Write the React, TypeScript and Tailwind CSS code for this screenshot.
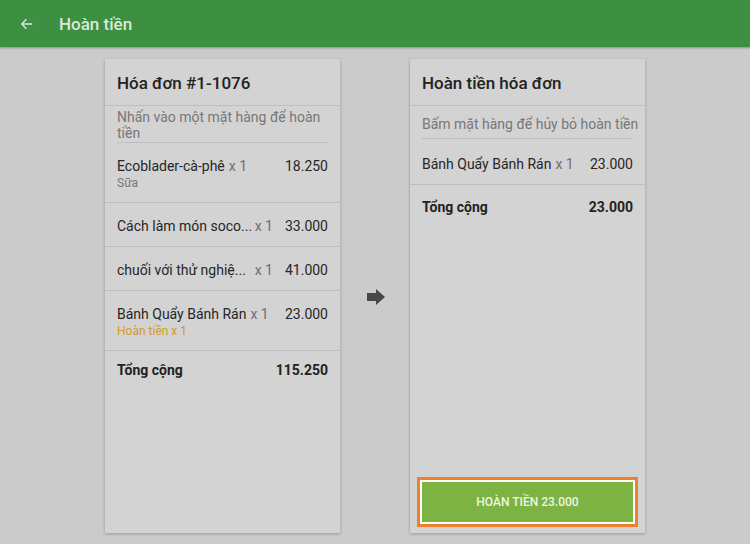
import React from "react";

function Row({ name, qty, price, sub, subColor, nameW, pt = "pt-[14px]", pb = "pb-[11px]" }: { name: string; qty: string; price: string; sub?: string; subColor?: string; nameW?: string; pt?: string; pb?: string }) {
  return (
    <div className={`border-b border-[#bdbdbd] px-3 ${pt} ${pb}`}>
      <div className="flex items-center text-[14px] leading-[18px]">
        <span className={`text-[#262626] whitespace-nowrap overflow-hidden ${nameW ?? ""}`}>{name}</span>
        <span className="text-[#6f6f6f] whitespace-nowrap ml-1">{qty}</span>
        <span className="ml-auto pl-3 text-[#262626]">{price}</span>
      </div>
      {sub && <div className={`text-[12px] leading-[16px] ${subColor}`}>{sub}</div>}
    </div>
  );
}

export default function App() {
  return (
    <div className="w-[750px] h-[544px] bg-[#cbcbcb] flex flex-col" style={{ fontFamily: "Roboto, 'Noto Sans', sans-serif" }}>
      <div className="h-[47px] bg-[#3d8f41] flex items-center shadow-[0_1px_2px_rgba(0,0,0,0.3)] shrink-0">
        <svg width="14" height="14" viewBox="0 0 24 24" className="ml-[20px] mt-[1px]" fill="none" stroke="#d9e8d9" strokeWidth="2.4">
          <path d="M21 12H4M11 4l-8 8 8 8" />
        </svg>
        <span className="ml-[25px] mt-[2px] text-[17px] text-[#dbe9dc] font-medium">Hoàn tiền</span>
      </div>
      <div className="flex pt-[12px] pl-[105px] h-[486px]">
        <div className="w-[235px] bg-[#d3d3d3] shadow-[0_1px_3px_rgba(0,0,0,0.25)] flex flex-col">
          <div className="h-[47px] flex items-center px-3 pt-[3px] border-b border-[#bdbdbd] text-[17px] font-medium text-[#222]">Hóa đơn #1-1076</div>
          <div className="px-3">
            <div className="pt-[3px] pb-[1px] border-b border-[#bdbdbd] text-[14px] leading-[16px] text-[#777]">Nhấn vào một mặt hàng để hoàn tiền</div>
          </div>
          <Row name="Ecoblader-cà-phê" qty="x 1" price="18.250" sub="Sữa" subColor="text-[#777]" />
          <Row name="Cách làm món soco..." qty="x 1" price="33.000" nameW="w-[134px]" />
          <Row name="chuối với thử nghiệ..." qty="x 1" price="41.000" nameW="w-[134px]" />
          <Row name="Bánh Quẩy Bánh Rán" qty="x 1" price="23.000" sub="Hoàn tiền x 1" subColor="text-[#d69a27]" />
          <div className="flex items-center px-3 pt-[9px] text-[14px] font-bold text-[#222]">
            <span>Tổng cộng</span>
            <span className="ml-auto">115.250</span>
          </div>
        </div>
        <div className="w-[70px] flex items-center justify-center">
          <svg width="18" height="16" viewBox="0 0 18 16" className="mt-[2px] ml-[1px]">
            <path d="M0 4h9V0l9 8-9 8v-4H0z" fill="#474747" />
          </svg>
        </div>
        <div className="w-[235px] bg-[#d3d3d3] shadow-[0_1px_3px_rgba(0,0,0,0.25)] flex flex-col">
          <div className="h-[47px] flex items-center px-3 pt-[3px] border-b border-[#bdbdbd] text-[17px] font-medium text-[#222]">Hoàn tiền hóa đơn</div>
          <div className="px-3">
            <div className="pt-[10px] pb-[6px] border-b border-[#bdbdbd] text-[14px] leading-[16px] text-[#777] whitespace-nowrap">Bấm mặt hàng để hủy bỏ hoàn tiền</div>
          </div>
          <Row name="Bánh Quẩy Bánh Rán" qty="x 1" price="23.000" pt="pt-[16px]" pb="pb-[11px]" />
          <div className="flex items-center px-3 pt-[12px] text-[14px] font-bold text-[#222]">
            <span>Tổng cộng</span>
            <span className="ml-auto">23.000</span>
          </div>
          <div className="mt-auto px-[7px] pb-[6px]">
            <div className="border-[3px] border-[#f0802e]">
              <div className="border-2 border-white">
                <div className="h-[40px] bg-[#7cb342] flex items-center justify-center text-[12px] font-medium text-[#eef5e6]">HOÀN TIỀN 23.000</div>
              </div>
            </div>
          </div>
        </div>
      </div>
    </div>
  );
}
